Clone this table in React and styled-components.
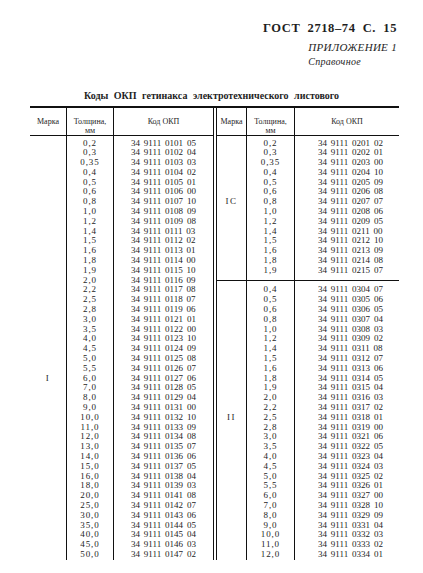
import React from 'react';
import styled, { createGlobalStyle } from 'styled-components';

const GlobalStyle = createGlobalStyle`
  * { box-sizing: border-box; }
  html, body { margin: 0; background: #ffffff; }
  body {
    font-family: 'Liberation Serif', 'DejaVu Serif', serif;
    color: #1e1e1e;
  }
`;

const Page = styled.div`
  width: 423px;
  height: 573px;
  padding-top: 21px;
  overflow: hidden;
`;

const Heading = styled.header`
  display: flex;
  flex-direction: column;
  align-items: flex-end;
  padding-right: 26px;
`;

const Gost = styled.div`
  font-size: 12.5px;
  line-height: 14px;
  font-weight: 700;
  letter-spacing: 0.6px;
  word-spacing: 3.5px;
`;

const Appendix = styled.div`
  display: flex;
  flex-direction: column;
  margin-top: 6px;
  font-style: italic;
`;

const AppendixTitle = styled.div`
  font-size: 11px;
  line-height: 12px;
  letter-spacing: 0.3px;
`;

const AppendixNote = styled.div`
  font-size: 10px;
  line-height: 11px;
  letter-spacing: 0.3px;
  margin-top: 2.5px;
`;

const Title = styled.h1`
  margin: 23.5px 0 0;
  font-size: 10px;
  line-height: 12px;
  font-weight: 700;
  text-align: center;
  word-spacing: 3px;
`;

const Table = styled.div`
  display: flex;
  gap: 2px;
  width: 369px;
  margin: 4px 0 0 30px;
  border-top: 2px solid #111;
`;

const Half = styled.div`
  display: flex;
  flex-direction: column;
  width: ${(p) => p.$width}px;
  border-${(p) => p.$side}: 1px solid #111;
`;

const HeaderRow = styled.div`
  display: grid;
  grid-template-columns: ${(p) => p.$cols};
  height: 28px;
  border-bottom: 1px solid #111;
`;

const HeadCell = styled.div`
  padding-top: 8.5px;
  font-size: 8px;
  line-height: 9px;
  text-align: center;
  border-left: ${(p) => (p.$ruled ? '1px solid #111' : 'none')};
`;

const Section = styled.div`
  --pt: ${(p) => p.$pt}px;
  --pb: ${(p) => p.$pb}px;
  display: grid;
  grid-template-columns: ${(p) => p.$cols};
  flex: ${(p) => (p.$grow ? 1 : 'none')};
  border-top: ${(p) => (p.$divided ? '1px solid #111' : 'none')};
`;

const Column = styled.div`
  padding: var(--pt) 0 var(--pb) ${(p) => p.$indent || 0}px;
  text-align: ${(p) => (p.$indent ? 'left' : 'center')};
  border-left: ${(p) => (p.$ruled ? '1px solid #111' : 'none')};
`;

const Line = styled.div`
  height: 9.8px;
  font-size: 9px;
  line-height: 9.8px;
  white-space: nowrap;
  letter-spacing: ${(p) => p.$spacing || 0}px;
  word-spacing: 1.6px;
`;

const leftRows = [
  ['0,2', '0101 05'], ['0,3', '0102 04'], ['0,35', '0103 03'], ['0,4', '0104 02'],
  ['0,5', '0105 01'], ['0,6', '0106 00'], ['0,8', '0107 10'], ['1,0', '0108 09'],
  ['1,2', '0109 08'], ['1,4', '0111 03'], ['1,5', '0112 02'], ['1,6', '0113 01'],
  ['1,8', '0114 00'], ['1,9', '0115 10'], ['2,0', '0116 09'], ['2,2', '0117 08'],
  ['2,5', '0118 07'], ['2,8', '0119 06'], ['3,0', '0121 01'], ['3,5', '0122 00'],
  ['4,0', '0123 10'], ['4,5', '0124 09'], ['5,0', '0125 08'], ['5,5', '0126 07'],
  ['6,0', '0127 06'], ['7,0', '0128 05'], ['8,0', '0129 04'], ['9,0', '0131 00'],
  ['10,0', '0132 10'], ['11,0', '0133 09'], ['12,0', '0134 08'], ['13,0', '0135 07'],
  ['14,0', '0136 06'], ['15,0', '0137 05'], ['16,0', '0138 04'], ['18,0', '0139 03'],
  ['20,0', '0141 08'], ['25,0', '0142 07'], ['30,0', '0143 06'], ['35,0', '0144 05'],
  ['40,0', '0145 04'], ['45,0', '0146 03'], ['50,0', '0147 02'],
];

const icRows = [
  ['0,2', '0201 02'], ['0,3', '0202 01'], ['0,35', '0203 00'], ['0,4', '0204 10'],
  ['0,5', '0205 09'], ['0,6', '0206 08'], ['0,8', '0207 07'], ['1,0', '0208 06'],
  ['1,2', '0209 05'], ['1,4', '0211 00'], ['1,5', '0212 10'], ['1,6', '0213 09'],
  ['1,8', '0214 08'], ['1,9', '0215 07'],
];

const iiRows = [
  ['0,4', '0304 07'], ['0,5', '0305 06'], ['0,6', '0306 05'], ['0,8', '0307 04'],
  ['1,0', '0308 03'], ['1,2', '0309 02'], ['1,4', '0311 08'], ['1,5', '0312 07'],
  ['1,6', '0313 06'], ['1,8', '0314 05'], ['1,9', '0315 04'], ['2,0', '0316 03'],
  ['2,2', '0317 02'], ['2,5', '0318 01'], ['2,8', '0319 00'], ['3,0', '0321 06'],
  ['3,5', '0322 05'], ['4,0', '0323 04'], ['4,5', '0324 03'], ['5,0', '0325 02'],
  ['5,5', '0326 01'], ['6,0', '0327 00'], ['7,0', '0328 10'], ['8,0', '0329 09'],
  ['9,0', '0331 04'], ['10,0', '0332 03'], ['11,0', '0333 02'], ['12,0', '0334 01'],
];

const Head = ({ cols }) => (
  <HeaderRow $cols={cols}>
    <HeadCell>Марка</HeadCell>
    <HeadCell $ruled>
      Толщина,
      <br />
      мм
    </HeadCell>
    <HeadCell $ruled>Код ОКП</HeadCell>
  </HeaderRow>
);

const Block = ({ cols, rows, mark, markRow, indent, pt, pb, grow, divided }) => (
  <Section $cols={cols} $pt={pt} $pb={pb} $grow={grow} $divided={divided}>
    <Column>
      {rows.map((r, i) => (
        <Line key={r[0]} $spacing={1.5}>
          {i === markRow ? mark : ''}
        </Line>
      ))}
    </Column>
    <Column $ruled>
      {rows.map((r) => (
        <Line key={r[0]} $spacing={0.9}>
          {r[0]}
        </Line>
      ))}
    </Column>
    <Column $ruled $indent={indent}>
      {rows.map((r) => (
        <Line key={r[0]}>34 9111 {r[1]}</Line>
      ))}
    </Column>
  </Section>
);

const LEFT_COLS = '36px 47px 1fr';
const RIGHT_COLS = '29px 48px 1fr';

export default function App() {
  return (
    <>
      <GlobalStyle />
      <Page>
        <Heading>
          <Gost>ГОСТ 2718–74 С. 15</Gost>
          <Appendix>
            <AppendixTitle>ПРИЛОЖЕНИЕ 1</AppendixTitle>
            <AppendixNote>Справочное</AppendixNote>
          </Appendix>
        </Heading>
        <Title>Коды ОКП гетинакса электротехнического листового</Title>
        <Table>
          <Half $width={184} $side="right">
            <Head cols={LEFT_COLS} />
            <Block cols={LEFT_COLS} rows={leftRows} mark="I" markRow={24} indent={17} pt={2.5} pb={0} grow />
          </Half>
          <Half $width={183} $side="left">
            <Head cols={RIGHT_COLS} />
            <Block cols={RIGHT_COLS} rows={icRows} mark="IС" markRow={6} indent={23} pt={2.5} pb={4} />
            <Block cols={RIGHT_COLS} rows={iiRows} mark="II" markRow={13} indent={23} pt={4.8} pb={0} grow divided />
          </Half>
        </Table>
      </Page>
    </>
  );
}
